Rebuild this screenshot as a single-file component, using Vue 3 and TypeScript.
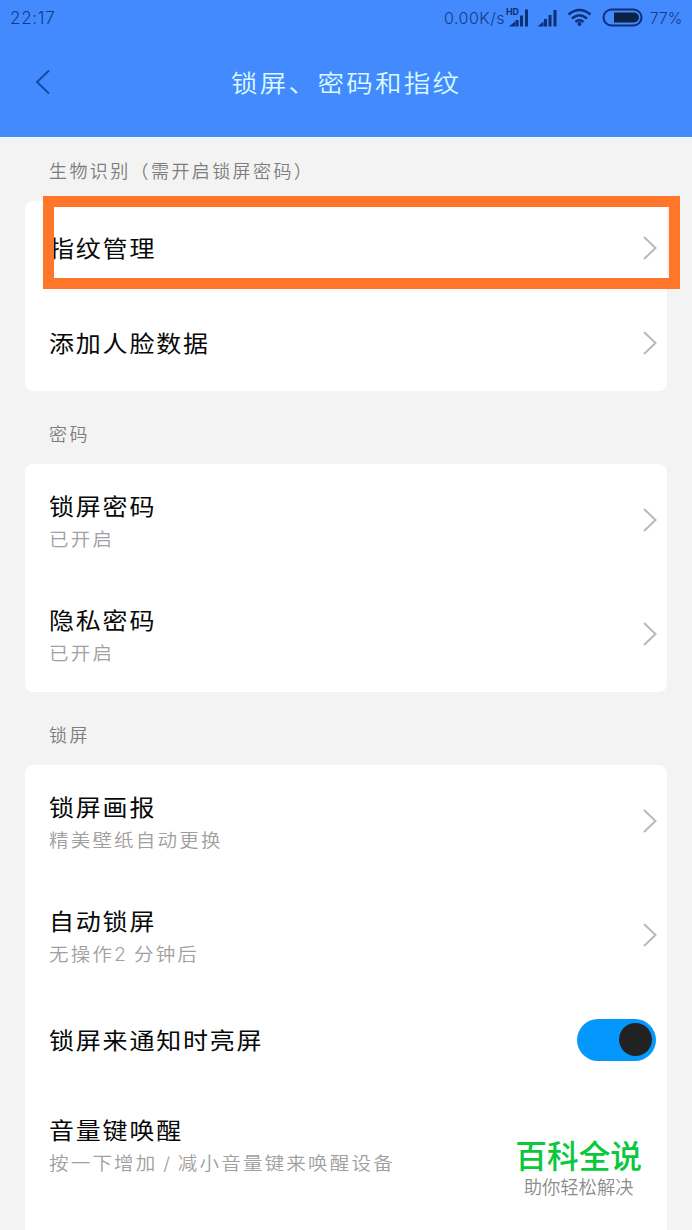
<script setup lang="ts">
interface Item {
  title: string
  note?: string
  toggle?: boolean
  arrow?: boolean
  marked?: boolean
}
interface Section {
  label: string
  items: Item[]
}

const sections: Section[] = [
  {
    label: '生物识别（需开启锁屏密码）',
    items: [
      { title: '指纹管理', arrow: true, marked: true },
      { title: '添加人脸数据', arrow: true },
    ],
  },
  {
    label: '密码',
    items: [
      { title: '锁屏密码', note: '已开启', arrow: true },
      { title: '隐私密码', note: '已开启', arrow: true },
    ],
  },
  {
    label: '锁屏',
    items: [
      { title: '锁屏画报', note: '精美壁纸自动更换', arrow: true },
      { title: '自动锁屏', note: '无操作2 分钟后', arrow: true },
      { title: '锁屏来通知时亮屏', toggle: true },
      { title: '音量键唤醒', note: '按一下增加 / 减小音量键来唤醒设备' },
    ],
  },
]
</script>

<template>
  <main class="screen">
    <header class="header">
      <div class="status">
        <span class="clock">22:17</span>
        <span class="speed">0.00K/s</span>
        <svg class="signals" width="144" height="36" viewBox="0 0 144 36">
          <g fill="#0d2f73">
            <path d="M3 26.500l6-5v5zM9.500 20h3v6.500h-3zM14 15.500h3v11h-3zM19 9.500h3v17h-3z" />
            <path d="M31.500 26.500l6-5v5zM38 19h3v7.500h-3zM42.500 15h3v11.500h-3zM47.500 10h3v16.500h-3z" />
          </g>
          <text class="hd" x="0" y="15" textLength="13" lengthAdjust="spacingAndGlyphs">HD</text>
          <g fill="none" stroke="#0d2f73" stroke-width="2.500">
            <path d="M62.500 14.500Q73.500 5.500 84.500 14.500" />
            <path d="M66 18.500Q73.500 12 81 18.500" />
            <path d="M69.500 22Q73.500 18.500 77.500 22" />
            <rect x="97.500" y="9.500" width="38" height="16" rx="8" stroke-width="2" />
          </g>
          <circle cx="73.500" cy="24" r="1.900" fill="#0d2f73" />
          <path d="M108 12.500h20a5 5 0 0 1 0 10h-20z" fill="#0b2145" />
        </svg>
        <span class="percent">77%</span>
      </div>
      <div class="bar">
        <svg class="back" width="16" height="26" viewBox="0 0 16 26">
          <path d="M14 1.500L2 13l12 11.500" fill="none" stroke="#164ba6" stroke-width="2" />
        </svg>
        <h1 class="heading">锁屏、密码和指纹</h1>
      </div>
    </header>

    <section v-for="section in sections" :key="section.label" class="section">
      <h2 class="label">{{ section.label }}</h2>
      <div class="card">
        <div
          v-for="item in section.items"
          :key="item.title"
          class="row"
          :class="{ tall: item.note }"
        >
          <div class="texts">
            <span class="title">{{ item.title }}</span>
            <span v-if="item.note" class="note">{{ item.note }}</span>
          </div>
          <svg v-if="item.arrow" class="arrow" width="16" height="26" viewBox="0 0 16 26">
            <path d="M3 2l11.500 11L3 24" fill="none" stroke="#b9b9b9" stroke-width="2" />
          </svg>
          <span v-if="item.toggle" class="toggle"><i class="knob"></i></span>
          <div v-if="item.marked" class="marker"></div>
        </div>
      </div>
    </section>

    <aside class="brand">
      <strong class="brand-name">百科全说</strong>
      <span class="brand-line">助你轻松解决</span>
    </aside>
  </main>
</template>

<style>
body {
  margin: 0;
  background: #f3f3f3;
}
</style>

<style scoped>
.screen {
  position: relative;
  width: 692px;
  height: 1230px;
  overflow: hidden;
  background: #f3f3f3;
  font-family: Inter, 'Noto Sans CJK SC', sans-serif;
  font-weight: 350;
}
.header {
  height: 137px;
  background: #438aff;
}
.status {
  display: flex;
  align-items: center;
  height: 36px;
  padding-left: 10px;
  font-size: 16px;
  font-weight: 350;
  color: #123b85;
  white-space: nowrap;
}
.clock {
  width: 434px;
  font-size: 17px;
  letter-spacing: 0.7px;
}
.speed {
  width: 62px;
  letter-spacing: 0.5px;
}
.signals {
  flex: none;
}
.hd {
  font: 700 9px Inter, sans-serif;
  fill: #0d2f73;
}
.percent {
  font-size: 15.500px;
}
.bar {
  display: flex;
  align-items: center;
  height: 92px;
  padding-left: 35px;
}
.back {
  margin-right: 180px;
}
.heading {
  margin: 0;
  padding-top: 2px;
  font-size: 26.500px;
  font-weight: 350;
  letter-spacing: 2.3px;
  line-height: 40px;
  color: #d9fbff;
  transform: scaleY(0.92);
}
.section {
  padding: 0 25px;
}
.label {
  display: flex;
  align-items: flex-end;
  box-sizing: border-box;
  height: 73px;
  margin: 0;
  padding: 0 24px 14px;
  font-size: 18px;
  font-weight: 350;
  letter-spacing: 2.400px;
  line-height: 30px;
  color: #7d7d7d;
}
.section:first-of-type .label {
  height: 64px;
}
.card {
  border-radius: 8px;
  background: #fff;
}
.section:last-of-type .card {
  height: 480px;
}
.row {
  position: relative;
  display: flex;
  align-items: center;
  justify-content: space-between;
  box-sizing: border-box;
  height: 95px;
  padding: 0 10px 2px 24px;
}
.row.tall {
  height: 114px;
}
.texts {
  display: flex;
  flex-direction: column;
  padding-top: 3px;
  white-space: nowrap;
}
.title {
  font-size: 25px;
  font-weight: 400;
  letter-spacing: 1.8px;
  line-height: 36px;
  color: #080808;
  transform: scaleY(0.91);
}
.note {
  font-size: 19.500px;
  letter-spacing: 2.200px;
  word-spacing: -2px;
  line-height: 30px;
  color: #a0a0a0;
  transform: scaleY(0.92);
}
.toggle {
  display: flex;
  align-items: center;
  justify-content: flex-end;
  box-sizing: border-box;
  width: 79px;
  height: 42px;
  margin-right: 1px;
  padding-right: 4px;
  border-radius: 21px;
  background: #0498ff;
}
.knob {
  width: 33px;
  height: 33px;
  border-radius: 50%;
  background: #222;
}
.marker {
  position: absolute;
  top: -5px;
  left: 18px;
  box-sizing: border-box;
  width: 637px;
  height: 93px;
  border: 11px solid #ff762b;
}
.brand {
  position: absolute;
  right: 50px;
  bottom: 30px;
  display: flex;
  flex-direction: column;
  align-items: center;
}
.brand-name {
  font-size: 31.700px;
  font-weight: 500;
  line-height: 34px;
  color: #09c83c;
}
.brand-line {
  font-size: 18.300px;
  line-height: 26px;
  color: #8c8c8c;
}
</style>
